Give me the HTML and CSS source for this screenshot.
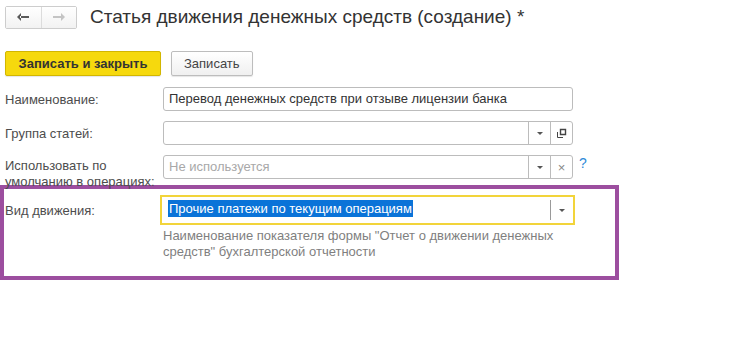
FILE: index.html
```html
<!DOCTYPE html>
<html lang="ru">
<head>
    <meta charset="UTF-8">
    <link rel="stylesheet" href="styles.css">
    <title>Статья движения денежных средств</title>
</head>
<body>
    <div class="header">
        <div class="nav">
            <button class="nav-btn back">
                <svg width="14" height="10" viewBox="0 0 14 10"><path d="M5 1 L1 5 L5 9 Z M4 4 H13 V6 H4 Z" fill="#5a5a5a"/></svg>
            </button>
            <button class="nav-btn fwd">
                <svg width="14" height="10" viewBox="0 0 14 10"><path d="M9 1 L13 5 L9 9 Z M1 4 H10 V6 H1 Z" fill="#c4c4c4"/></svg>
            </button>
        </div>
        <h1 class="title">Статья движения денежных средств (создание) *</h1>
    </div>

    <div class="toolbar">
        <button class="btn primary">Записать и закрыть</button>
        <button class="btn">Записать</button>
    </div>

    <div class="form">
        <div class="row">
            <label class="label">Наименование:</label>
            <div class="field">
                <span class="value">Перевод денежных средств при отзыве лицензии банка</span>
            </div>
        </div>
        <div class="row">
            <label class="label">Группа статей:</label>
            <div class="field">
                <span class="value"></span>
                <span class="fbtn"><span class="caret"></span></span>
                <span class="fbtn">
                    <svg width="11" height="11" viewBox="0 0 11 11"><path d="M4.5 1.5 H9.5 V6.5 H4.5 Z" fill="none" stroke="#444" stroke-width="1.4"/><path d="M1.5 4 V9.5 H7" fill="none" stroke="#444" stroke-width="1"/></svg>
                </span>
            </div>
        </div>
        <div class="row">
            <label class="label two">Использовать по умолчанию в операциях:</label>
            <div class="field">
                <span class="value placeholder">Не используется</span>
                <span class="fbtn"><span class="caret"></span></span>
                <span class="fbtn clear">×</span>
            </div>
            <span class="help">?</span>
        </div>
    </div>

    <div class="frame">
        <div class="row">
            <label class="label">Вид движения:</label>
            <div class="field focus">
                <span class="value"><span class="sel">Прочие платежи по текущим операциям</span></span>
                <span class="fbtn"><span class="caret"></span></span>
            </div>
        </div>
        <p class="hint">Наименование показателя формы "Отчет о движении денежных средств" бухгалтерской отчетности</p>
    </div>
</body>
</html>
```

FILE: styles.css
```css
body {
    margin: 0;
    background: #fff;
    font-family: Arial, "Liberation Sans", sans-serif;
    font-size: 13px;
    color: #4d4d4d;
}

.header {
    display: flex;
    align-items: center;
    padding: 5px 5px 0 5px;
    height: 24px;
}

.nav {
    display: flex;
    width: 72px;
    height: 23px;
    border: 1px solid #cdcdcd;
    border-radius: 2px;
    box-sizing: border-box;
}

.nav-btn {
    flex: 1;
    border: none;
    background: linear-gradient(#fff, #f2f2f2);
    padding: 0;
    display: flex;
    align-items: center;
    justify-content: center;
}

.nav-btn.back {
    border-right: 1px solid #dcdcdc;
}

.title {
    margin: 0 0 0 13px;
    font-weight: normal;
    font-size: 19px;
    color: #333;
}

.toolbar {
    display: flex;
    gap: 10px;
    padding: 22px 5px 0 5px;
}

.btn {
    height: 25px;
    padding: 0 12px;
    border: 1px solid #bdbdbd;
    border-radius: 2px;
    background: linear-gradient(#fff, #f0f0f0);
    font-family: inherit;
    font-size: 13px;
    color: #444;
    box-shadow: 0 1px 1px rgba(0, 0, 0, 0.1);
}

.btn.primary {
    width: 156px;
    background: #f6d90d;
    border-color: #d2b600;
    font-weight: bold;
    color: #333;
}

.form {
    padding-top: 6px;
}

.row {
    display: flex;
    align-items: center;
    height: 34px;
}

.label {
    width: 158px;
    padding-left: 5px;
    flex-shrink: 0;
}

.label.two {
    line-height: 16px;
    padding-top: 13px;
}

.field {
    display: flex;
    width: 410px;
    height: 24px;
    border: 1px solid #bcbcbc;
    border-radius: 3px;
    box-sizing: border-box;
    background: #fff;
}

.value {
    flex: 1;
    padding-left: 5px;
    line-height: 22px;
    color: #333;
    white-space: nowrap;
}

.value.placeholder {
    color: #a8a8a8;
}

.fbtn {
    width: 21px;
    border-left: 1px solid #bcbcbc;
    display: flex;
    align-items: center;
    justify-content: center;
    color: #888;
}

.fbtn.clear {
    font-size: 13px;
}

.caret {
    width: 0;
    height: 0;
    border-left: 3px solid transparent;
    border-right: 3px solid transparent;
    border-top: 3px solid #555;
}

.help {
    margin-left: 6px;
    margin-top: -8px;
    color: #2f8ad8;
    font-size: 14px;
}

.frame {
    width: 619px;
    height: 95px;
    margin-top: 1px;
    border: 4px solid #9c4e9f;
    box-sizing: border-box;
}

.frame .row {
    height: 36px;
    margin-top: 3px;
}

.frame .label {
    padding-left: 1px;
}

.field.focus {
    margin-left: -3px;
    width: 415px;
    height: 30px;
    border: 2px solid #f2d43a;
    border-radius: 0;
    padding: 1px;
}

.field.focus .fbtn {
    border-left-color: #9a9a9a;
    margin: 2px 0;
}

.sel {
    background: #0a73d8;
    color: #fff;
    padding: 1px 1px;
}

.hint {
    margin: 0 0 0 159px;
    width: 400px;
    line-height: 16px;
    color: #7f7f7f;
}
```
